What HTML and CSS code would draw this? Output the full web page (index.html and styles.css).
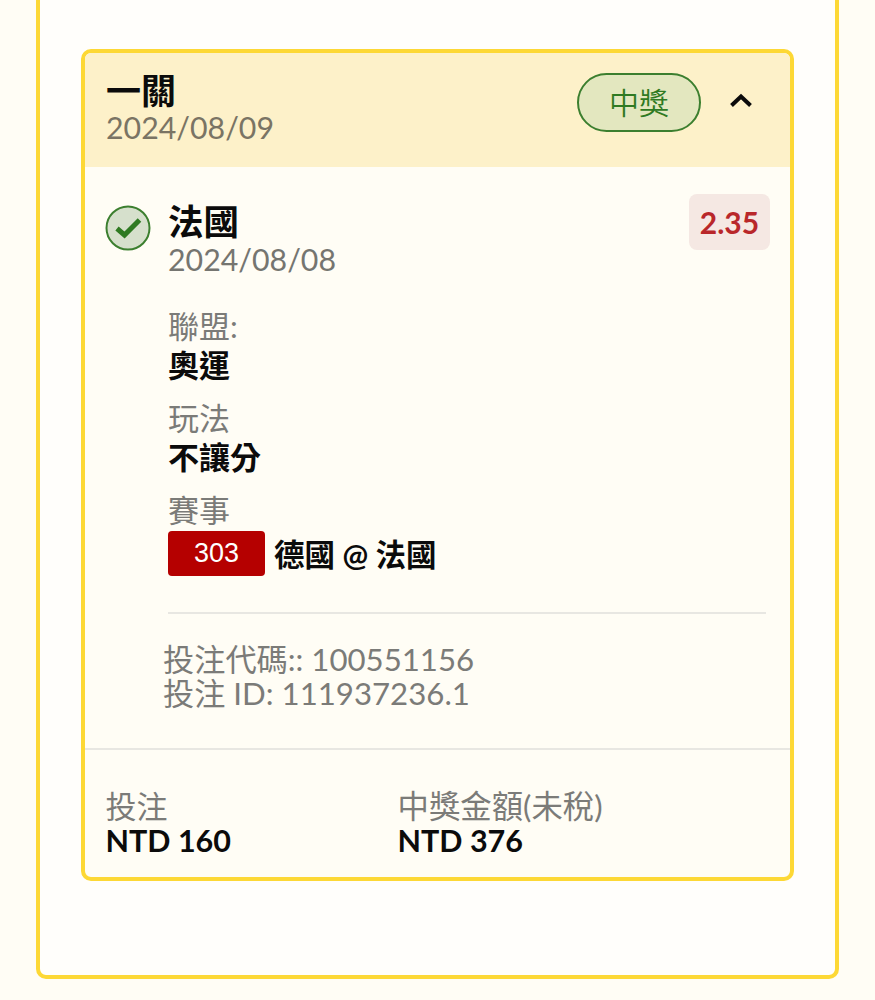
FILE: index.html
```html
<!DOCTYPE html>
<html lang="zh-Hant">
<head>
<meta charset="utf-8">
<title>投注紀錄</title>
<link rel="stylesheet" href="styles.css">
</head>
<body>
<main class="panel">
  <section class="card">
    <header class="card-head">
      <div class="head-text">
        <div class="title">一關</div>
        <div class="date">2024/08/09</div>
      </div>
      <span class="pill">中獎</span>
      <svg class="chevron" width="24" height="16" viewBox="0 0 24 16" aria-hidden="true"><path d="M2.500 13.500 12 4.500l9.500 9" fill="none" stroke="#0b0b0b" stroke-width="4"/></svg>
    </header>
    <div class="card-body">
      <div class="leg">
        <svg class="check" width="46" height="46" viewBox="0 0 46 46" aria-hidden="true"><circle cx="23" cy="23" r="21.500" fill="#d6e0cc" stroke="#3c7f2f" stroke-width="2"/><path d="M12 23.500l7.500 6.500L34.500 15" fill="none" stroke="#2f7a22" stroke-width="5"/></svg>
        <div class="leg-main">
          <div class="leg-top">
            <div>
              <div class="title leg-title">法國</div>
              <div class="date leg-date">2024/08/08</div>
            </div>
            <span class="odds">2.35</span>
          </div>
          <div class="field first-field">
            <div class="label">聯盟:</div>
            <div class="value">奧運</div>
          </div>
          <div class="field">
            <div class="label">玩法</div>
            <div class="value">不讓分</div>
          </div>
          <div class="field">
            <div class="label">賽事</div>
            <div class="match"><span class="code">303</span><span class="value">德國 @ 法國</span></div>
          </div>
          <hr class="rule">
          <div class="ids">
            <div>投注代碼:: 100551156</div>
            <div>投注 ID: 111937236.1</div>
          </div>
        </div>
      </div>
    </div>
    <footer class="card-foot">
      <div class="stat stat-stake">
        <div class="label">投注</div>
        <div class="amount">NTD 160</div>
      </div>
      <div class="stat">
        <div class="label foot-label">中獎金額(未稅)</div>
        <div class="amount">NTD 376</div>
      </div>
    </footer>
  </section>
</main>
</body>
</html>
```

FILE: styles.css
```css
* { box-sizing: border-box; }

html, body {
  margin: 0;
  height: 1000px;
  overflow: hidden;
  background: #fffdf5;
}

body {
  font-family: Lato, "Noto Sans CJK TC", sans-serif;
  color: #0b0b0b;
}

.panel {
  width: 803px;
  height: 1000px;
  margin: -21px 0 0 36px;
  padding: 66px 41px 0;
  background: #fffefb;
  border: 4px solid #fdd835;
  border-radius: 10px;
}

.card {
  width: 713px;
  border: 4px solid #fdd835;
  border-radius: 10px;
  background: #fffdf5;
  overflow: hidden;
}

.card-head {
  display: flex;
  align-items: flex-start;
  height: 114px;
  padding: 18px 37px 0 21px;
  background: #fdf1c9;
}

.head-text { flex: 1; }

.title {
  font-size: 35px;
  font-weight: 700;
  line-height: 38px;
}

.leg-title { font-size: 35.500px; }

.date {
  font-size: 30.300px;
  line-height: 36px;
  color: #7a7464;
}

.leg-date { color: #757570; }

.pill {
  width: 124px;
  height: 59px;
  margin-top: 2px;
  border: 2px solid #3c7f2f;
  border-radius: 30px;
  background: #e3e7bf;
  color: #2f7a22;
  font-size: 30px;
  font-weight: 350;
  line-height: 55px;
  text-align: center;
}

.chevron { margin: 21px 0 0 28px; }

.card-body { padding: 27px 20px 0 20px; }

.leg { display: flex; gap: 17px; }

.check { flex: none; margin-top: 11px; }

.leg-main { flex: 1; }

.leg-top {
  display: flex;
  justify-content: space-between;
  align-items: flex-start;
  padding-top: 9px;
}

.odds {
  margin-top: -9px;
  width: 81px;
  height: 56px;
  border-radius: 8px;
  background: #f5e8e3;
  color: #b9272a;
  font-size: 30px;
  font-weight: 700;
  line-height: 56px;
  text-align: center;
}

.field { margin-top: 14px; }
.first-field { margin-top: 30px; }

.label {
  font-size: 31px;
  line-height: 38px;
  color: #7b7b78;
}

.foot-label { font-size: 31.400px; }

.value {
  font-size: 31px;
  font-weight: 700;
  line-height: 40px;
}

.match {
  display: flex;
  align-items: center;
  gap: 9px;
  margin-top: 2px;
}

.match .value { font-size: 30.500px; }

.code {
  width: 97px;
  height: 45px;
  border-radius: 4px;
  background: #b50000;
  color: #fff;
  font-family: "Liberation Sans", sans-serif;
  font-size: 27px;
  line-height: 45px;
  text-align: center;
}

.rule {
  height: 2px;
  margin: 36px 4px 0 0;
  border: 0;
  background: #e8e7e2;
}

.ids {
  margin: 28px 0 0 -5px;
  padding-bottom: 38px;
  font-size: 31.200px;
  line-height: 34px;
  color: #7b7b78;
}

.card-foot {
  display: flex;
  height: 129px;
  padding: 37px 0 0 20.500px;
  border-top: 2px solid #e8e7e2;
}

.stat-stake { width: 292px; }

.amount {
  font-size: 30.500px;
  font-weight: 700;
  line-height: 30px;
}
```
